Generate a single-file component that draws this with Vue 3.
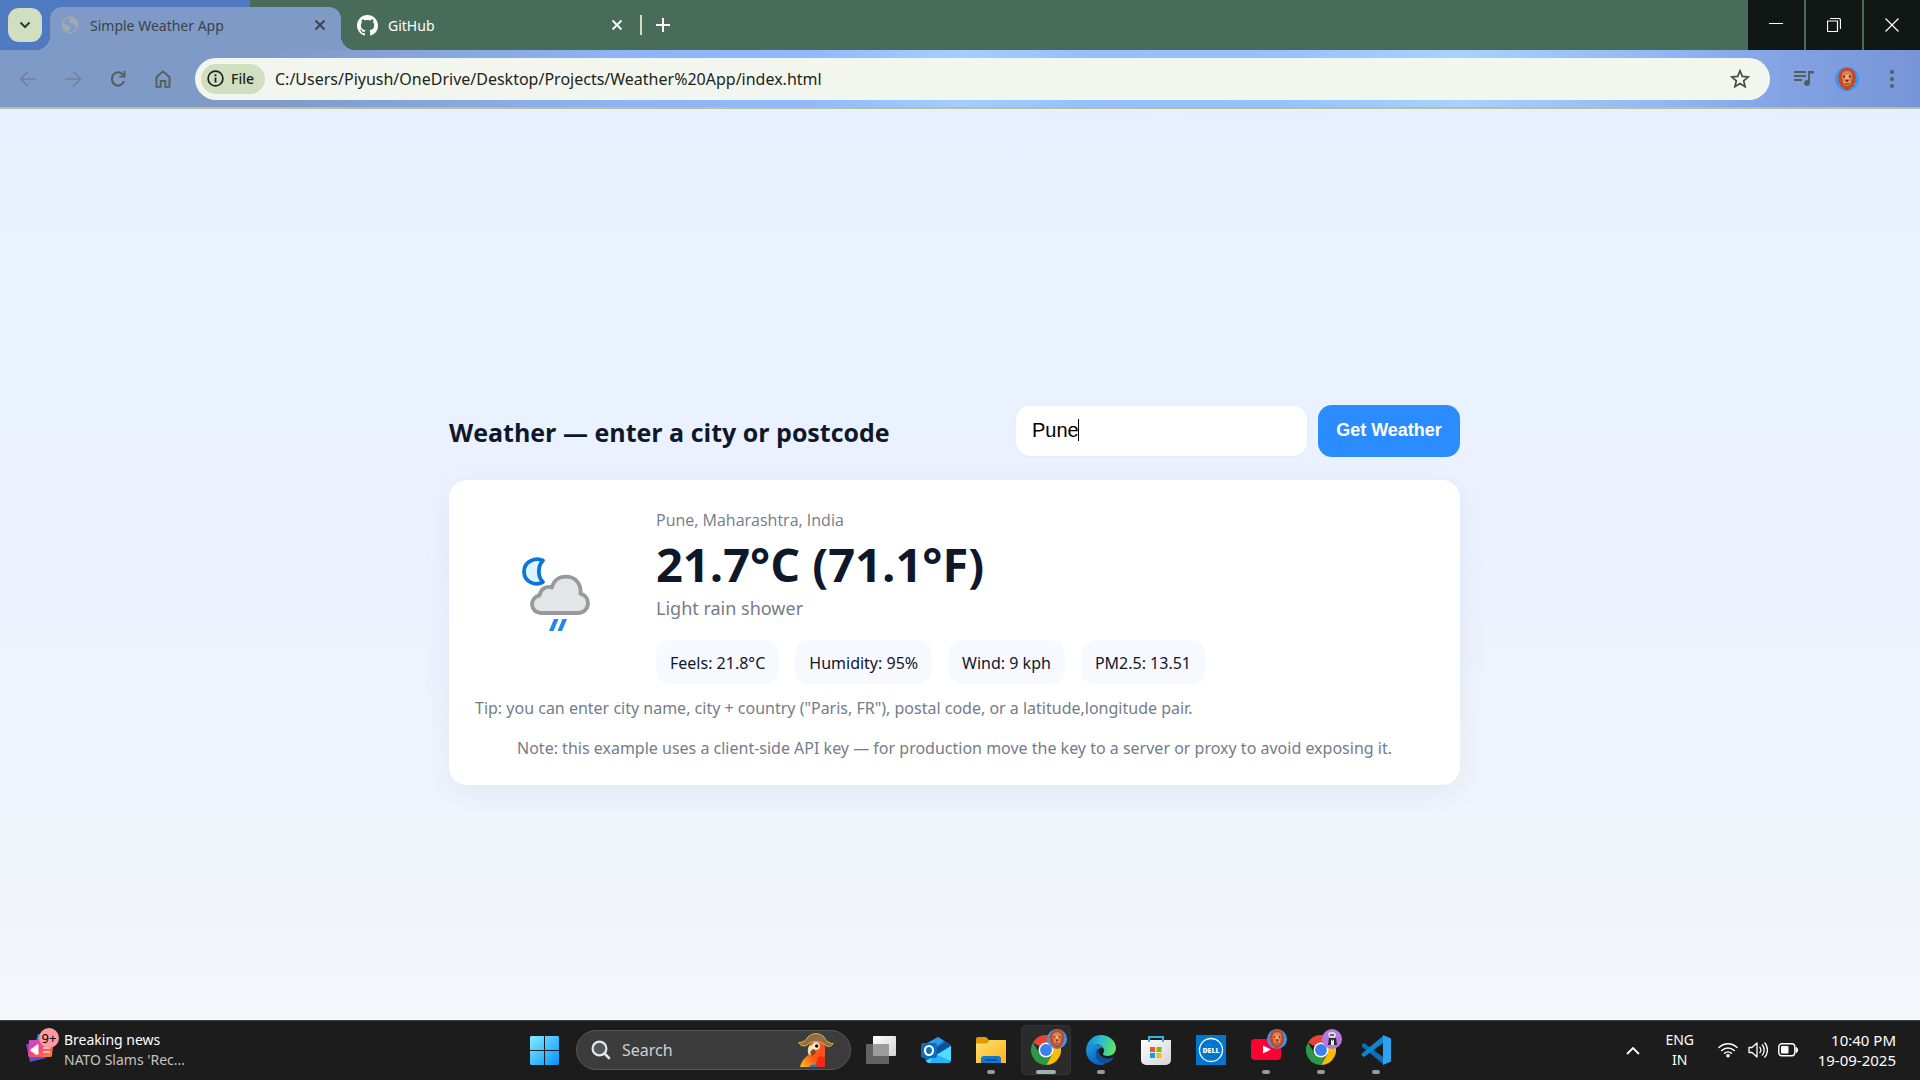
<script setup>
import { ref } from 'vue'

const city = ref('Pune')
const url = ref('C:/Users/Piyush/OneDrive/Desktop/Projects/Weather%20App/index.html')
const chips = ['Feels: 21.8°C', 'Humidity: 95%', 'Wind: 9 kph', 'PM2.5: 13.51']
</script>

<template>
  <div class="desktop">
    <!-- shared drawings -->
    <svg class="defs" width="0" height="0" aria-hidden="true">
      <defs>
        <linearGradient id="winG" x1="0" y1="0" x2="1" y2="1">
          <stop offset="0" stop-color="#7df0ff" /><stop offset="1" stop-color="#0a8fff" />
        </linearGradient>
        <linearGradient id="foldG" x1="0" y1="0" x2="1" y2="1">
          <stop offset="0" stop-color="#ffe070" /><stop offset="1" stop-color="#fbb41c" />
        </linearGradient>
        <linearGradient id="edgeA" x1="0" y1="0.3" x2="1" y2="0.5">
          <stop offset="0" stop-color="#1590dc" /><stop offset="0.5" stop-color="#2cc0cf" /><stop offset="1" stop-color="#62e45a" />
        </linearGradient>
        <linearGradient id="edgeB" x1="0" y1="0" x2="0.6" y2="1">
          <stop offset="0" stop-color="#1b9de2" /><stop offset="1" stop-color="#0c5fbd" />
        </linearGradient>
        <linearGradient id="whiteG" x1="0" y1="0" x2="1" y2="1">
          <stop offset="0" stop-color="#ffffff" /><stop offset="1" stop-color="#d2d2d2" />
        </linearGradient>
        <linearGradient id="newsG" x1="0" y1="0" x2="1" y2="1">
          <stop offset="0" stop-color="#c546d8" /><stop offset="0.5" stop-color="#f2477e" /><stop offset="1" stop-color="#f98a2c" />
        </linearGradient>
        <linearGradient id="parrotG" x1="1" y1="0" x2="0" y2="1">
          <stop offset="0" stop-color="#ff4a26" /><stop offset="0.55" stop-color="#fb5a17" /><stop offset="1" stop-color="#ffc21f" />
        </linearGradient>
        <symbol id="lion" viewBox="0 0 24 24">
          <circle cx="12" cy="12" r="12" fill="#3f97e8" />
          <path d="M12 0.6l2 1 2.6 0 1.2 2 2.2 1.4-.2 2.6 1.4 2.4-1 2.2.4 2.6-1.8 2-.4 2.6-2.4 1-1.4 2-2.6 1.2-2.6-1.2-1.4-2-2.4-1-.4-2.6-1.8-2 .4-2.6-1-2.2 1.4-2.4-.2-2.6 2.2-1.4 1.2-2 2.6 0z" fill="#c4492b" />
          <path d="M12 4c3.600 0 5.400 2 5.200 5.500l-1 5.500c-.5 2.500-2.200 4-4.200 4s-3.700-1.500-4.200-4l-1-5.500C6.600 6 8.400 4 12 4z" fill="#dd8453" />
          <path d="M10.700 8h2.600l1 6.500-2.300 1.600-2.300-1.600z" fill="#f0b183" />
          <circle cx="9" cy="9.600" r="1" fill="#4a1d14" /><circle cx="15" cy="9.600" r="1" fill="#4a1d14" />
          <path d="M10.400 13h3.200L12 15zM10 17h4" fill="#5b2018" stroke="#7a2d1c" stroke-width="1" />
        </symbol>
        <symbol id="chrome" viewBox="0 0 48 48">
          <path d="M24 24L3.200 12A24 24 0 0 1 44.800 12H24z" fill="#ea4335" />
          <path d="M24 12h20.800A24 24 0 0 1 24 48L34.400 30z" fill="#fbbc04" />
          <path d="M24 48A24 24 0 0 1 3.200 12L13.600 30 24 36l10.400-6z" fill="#2b9948" />
          <circle cx="24" cy="24" r="12" fill="#fff" /><circle cx="24" cy="24" r="9.500" fill="#3c7ff0" />
        </symbol>
      </defs>
    </svg>

    <header class="browser">
      <div class="tabstrip">
        <div class="strip-left">
          <button class="tab-search" aria-label="Search tabs">
            <svg width="14" height="14" viewBox="0 0 14 14"><path d="M2.500 4.500L7 9l4.500-4.500" fill="none" stroke="#2f3a2d" stroke-width="2" /></svg>
          </button>
        </div>
        <div class="tab active">
          <svg width="18" height="18" viewBox="0 0 18 18">
            <circle cx="9" cy="9" r="7.700" fill="none" stroke="#a2a8b0" stroke-width="1.500" />
            <path d="M9.500 1.500c-1 1.500-.5 2.500-2 3.200-.8 2 2.200 1.300 2.600 2.800.6 1.800 3.200.6 3.200 2.300 0 1.200 2 .8 3.200.2C17 5 14 1.500 9.500 1.500zM1.500 8c2 .3 4.500-.2 5.500 1.500.6 1.200 2.600.8 2.600 2.400 0 1.500-2 1.500-2 3.200L7 16.200C3.500 15.500 1.200 12 1.500 8z" fill="#a2a8b0" />
          </svg>
          <span class="tab-title">Simple Weather App</span>
          <button class="tab-close" aria-label="Close Simple Weather App">
            <svg width="12" height="12" viewBox="0 0 12 12"><path d="M1.500 1.500l9 9M10.500 1.500l-9 9" stroke="currentColor" stroke-width="1.800" /></svg>
          </button>
        </div>
        <div class="tab idle">
          <svg width="21" height="21" viewBox="0 0 16 16"><path fill="#fff" d="M8 0C3.580 0 0 3.580 0 8c0 3.540 2.290 6.530 5.470 7.590.4.070.55-.17.55-.38 0-.19-.01-.82-.01-1.490-2.010.37-2.530-.49-2.690-.94-.09-.23-.48-.94-.82-1.130-.28-.15-.68-.52-.01-.53.63-.01 1.080.58 1.230.82.72 1.210 1.870.87 2.330.66.070-.52.28-.87.51-1.070-1.780-.2-3.640-.89-3.640-3.950 0-.87.31-1.590.82-2.150-.08-.2-.36-1.020.08-2.120 0 0 .67-.21 2.200.82.64-.18 1.320-.27 2-.27s1.360.09 2 .27c1.530-1.040 2.200-.82 2.200-.82.44 1.100.16 1.920.08 2.120.51.56.82 1.270.82 2.150 0 3.070-1.870 3.750-3.650 3.950.29.25.54.73.54 1.480 0 1.070-.01 1.930-.01 2.200 0 .21.15.46.55.38A8.010 8.010 0 0 0 16 8c0-4.420-3.580-8-8-8z" /></svg>
          <span class="tab-title">GitHub</span>
          <button class="tab-close" aria-label="Close GitHub">
            <svg width="12" height="12" viewBox="0 0 12 12"><path d="M1.500 1.500l9 9M10.500 1.500l-9 9" stroke="currentColor" stroke-width="1.800" /></svg>
          </button>
        </div>
        <span class="tab-divider"></span>
        <button class="new-tab" aria-label="New tab">
          <svg width="14" height="14" viewBox="0 0 14 14"><path d="M7 0v14M0 7h14" stroke="#fff" stroke-width="2" /></svg>
        </button>
        <div class="window-buttons">
          <button aria-label="Minimize"><svg width="14" height="14" viewBox="0 0 14 14"><path d="M0 5.500h14" stroke="#fff" /></svg></button>
          <button aria-label="Restore"><svg width="14" height="14" viewBox="0 0 14 14"><path d="M.5 3h10v10.500H.5zM3 .5h8.500a2 2 0 0 1 2 2V11" fill="none" stroke="#fff" stroke-width="1.200" /></svg></button>
          <button aria-label="Close"><svg width="14" height="14" viewBox="0 0 14 14"><path d="M.5.5l13 13M13.500.5l-13 13" stroke="#fff" stroke-width="1.200" /></svg></button>
        </div>
      </div>

      <div class="toolbar">
        <nav class="nav" aria-label="Navigation">
          <button class="dim" aria-label="Back"><svg width="18" height="18" viewBox="0 0 18 18"><path d="M17 9H2M9 1.500L1.500 9 9 16.500" fill="none" stroke="currentColor" stroke-width="1.700" /></svg></button>
          <button class="dim" aria-label="Forward"><svg width="18" height="18" viewBox="0 0 18 18"><path d="M1 9h15M9 1.500L16.500 9 9 16.500" fill="none" stroke="currentColor" stroke-width="1.700" /></svg></button>
          <button aria-label="Reload"><svg width="16" height="18" viewBox="0 0 16 18"><path d="M14 11A6.200 6.700 0 1 1 12.800 4.500l1.200 1.500" fill="none" stroke="currentColor" stroke-width="2" /><path d="M15.500 1v6.500H9.500V5.800h4V1z" fill="currentColor" /></svg></button>
          <button aria-label="Home"><svg width="16" height="18" viewBox="0 0 16 18"><path d="M1.500 16.900V7L8 1.400 14.500 7v9.900h-4.200V11H5.700v5.900z" fill="none" stroke="currentColor" stroke-width="1.900" /></svg></button>
        </nav>
        <div class="omnibox">
          <button class="file-chip">
            <svg width="17" height="17" viewBox="0 0 17 17"><circle cx="8.500" cy="8.500" r="7.400" fill="none" stroke="#1c211b" stroke-width="1.700" /><path d="M8.500 7.500v5M8.500 4.300v1.900" stroke="#1c211b" stroke-width="1.800" /></svg>
            File
          </button>
          <input v-model="url" class="url" type="text" aria-label="Address" />
          <button class="star" aria-label="Bookmark this tab">
            <svg width="20" height="20" viewBox="0 0 20 20"><path d="M10 1.800l2.300 5.600 6 .5-4.600 3.900 1.400 5.900-5.100-3.100-5.100 3.100 1.400-5.900L1.700 7.900l6-.5z" fill="none" stroke="#474d45" stroke-width="1.700" /></svg>
          </button>
        </div>
        <div class="tools">
          <button aria-label="Media controls"><svg width="20" height="18" viewBox="0 0 20 18"><path d="M0 2h12M0 6h12M0 10h8" stroke="currentColor" stroke-width="2" /><path d="M14 1h6v2.400h-4V13a3 3 0 1 1-2-2.800z" fill="currentColor" /></svg></button>
          <button aria-label="Profile"><svg width="24" height="24"><use href="#lion" /></svg></button>
          <button class="menu" aria-label="Menu"><svg width="4" height="20" viewBox="0 0 4 20"><g fill="currentColor"><circle cx="2" cy="3" r="2" /><circle cx="2" cy="10" r="2" /><circle cx="2" cy="17" r="2" /></g></svg></button>
        </div>
      </div>
    </header>

    <main class="page">
      <div class="app">
        <form class="app-head" @submit.prevent>
          <h1>Weather — enter a city or postcode</h1>
          <div class="field">
            <input v-model="city" type="text" aria-label="City or postcode" />
            <span class="caret"></span>
          </div>
          <button class="go" type="submit">Get Weather</button>
        </form>

        <section class="card">
          <div class="current">
            <svg class="weather-icon" width="96" height="96" viewBox="0 0 96 96">
              <path d="M36 13.500C29 10 17 14 17 24.500s11.500 15 19 10.500c-5.500-5-5.500-16 0-21.500z" fill="#dcf5ff" stroke="#0f74d8" stroke-width="3.800" stroke-linejoin="round" />
              <path d="M34 66a8.800 8.800 0 0 1-1.500-17.500C33.500 42 39 38.500 45 40.500 46.500 33.500 52 29.700 59 29.700c9.500 0 15.500 7.300 14.500 17 4.500 1.300 7.500 5 7.500 9.500 0 5.600-4.400 9.800-10 9.800z" fill="#e3e5e7" stroke="#97999b" stroke-width="3.800" stroke-linejoin="round" />
              <path d="M47 72h4.500l-5 12H42zM55.500 72H60l-5 12h-4.500z" fill="#2386ea" />
            </svg>
            <div class="reading">
              <p class="place">Pune, Maharashtra, India</p>
              <p class="temp">21.7°C (71.1°F)</p>
              <p class="condition">Light rain shower</p>
              <ul class="chips">
                <li v-for="c in chips" :key="c">{{ c }}</li>
              </ul>
            </div>
          </div>
          <p class="tip">Tip: you can enter city name, city + country ("Paris, FR"), postal code, or a latitude,longitude pair.</p>
          <p class="note">Note: this example uses a client-side API key — for production move the key to a server or proxy to avoid exposing it.</p>
        </section>
      </div>
    </main>

    <footer class="taskbar">
      <button class="news">
        <span class="news-icon">
          <svg width="30" height="32" viewBox="0 0 30 32">
            <path d="M13 4l14 3-4 16-14-3z" fill="#1d9bea" />
            <path d="M1 14l18 1 2 13-16 4z" fill="#6a4bd0" />
            <path d="M4 10h23a1.500 1.500 0 0 1 1.500 1.700L27 25.500a2 2 0 0 1-2 1.500H5a2 2 0 0 1-2-2z" fill="url(#newsG)" />
            <path d="M6 19.500l7-5v10l-7-3.500zM8 21l3 4" fill="#fff" stroke="#fff" />
            <path d="M18 18h7M18 22h7" stroke="#ffd7cf" stroke-width="1.600" />
          </svg>
          <span class="badge">9+</span>
        </span>
        <span class="news-text"><span>Breaking news</span><span class="muted">NATO Slams 'Rec...</span></span>
      </button>

      <div class="apps">
        <button class="slot start" aria-label="Start">
          <svg width="29" height="29" viewBox="0 0 29 29"><path d="M1 0h13v14H0V1zM15 0h13l1 1v13H15zM0 15h14v14H1l-1-1zM15 15h14v13l-1 1H15z" fill="url(#winG)" /></svg>
        </button>
        <label class="search">
          <svg width="20" height="20" viewBox="0 0 20 20"><circle cx="8.500" cy="8.500" r="6.900" fill="#55585a" stroke="#e6e6e6" stroke-width="2.200" /><path d="M13.500 13.500l4.500 4.500" stroke="#e6e6e6" stroke-width="2.600" stroke-linecap="round" /></svg>
          <input type="text" placeholder="Search" aria-label="Search" />
          <svg class="parrot" width="36" height="34" viewBox="0 0 36 34">
            <path d="M11 13C12 7 26 6 27 14v20H2c2-7 6-11 10-13z" fill="url(#parrotG)" />
            <path d="M20 24c4-2 6 1 7 0v10H17z" fill="#f02c16" />
            <path d="M11 34c2-3 5-3 8-1v1z" fill="#2577c8" />
            <path d="M14 12c-5 0-5 7-3 10 1.500 0 5-3 5-6z" fill="#efe2b5" /><path d="M12 19l4-4 2 5-4 3z" fill="#8a4a20" />
            <circle cx="18" cy="13" r="3.800" fill="#fff1e4" /><circle cx="18.700" cy="13" r="1.800" fill="#1b1310" />
            <path d="M.8 9.500C5 9.500 8 7.500 10 4c4-4.500 12-4.500 16 0 2 3.500 5 6.500 9.200 6.500-1 2-4 4-6.700 2.500C22.500 7 14 7 8.500 12.500c-3 1.200-6.700 0-7.700-3z" fill="#8f7046" stroke="#e0b83c" stroke-width="1" />
          </svg>
        </label>
        <button class="slot" aria-label="Task view">
          <svg width="30" height="28" viewBox="0 0 30 28"><rect x="0" y="8" width="23" height="20" rx="1" fill="#636363" /><rect x="7" y="0" width="23" height="20" rx="1" fill="url(#whiteG)" /><path d="M7 8h16v12H7z" fill="#9c9c9c" /></svg>
        </button>
        <button class="slot" aria-label="Outlook">
          <svg width="30" height="28" viewBox="0 0 30 28">
            <path d="M4 8L17 1l13 8v14a4 4 0 0 1-4 4H9a5 5 0 0 1-5-5z" fill="#1373c9" />
            <path d="M5 8L17 1l6 4-11 8z" fill="#2f9be8" /><path d="M12 14L24 6l6 3.500-14 9z" fill="#0b4fa0" />
            <path d="M30 10v13a4 4 0 0 1-4 4H9c-2 0-3-1-4-2z" fill="#4fdcff" /><path d="M12 17l18 8c-1 1-2 2-4 2H9z" fill="#27b4f5" />
            <rect x="0" y="7" width="16" height="15" rx="2" fill="#0f6cbd" /><ellipse cx="8" cy="14.500" rx="4" ry="4.500" fill="none" stroke="#fff" stroke-width="2.200" />
          </svg>
        </button>
        <button class="slot running" aria-label="File Explorer">
          <svg width="30" height="28" viewBox="0 0 30 28"><path d="M0 3a2 2 0 0 1 2-2h8l3 3h14v10H0z" fill="#dc9c05" /><path d="M0 7.500h11L13.500 4H30v23H0z" fill="url(#foldG)" /><path d="M5 27v-4a3 3 0 0 1 3-3h14a3 3 0 0 1 3 3v4z" fill="#1578cd" /><path d="M9 24h12" stroke="#0b4f94" stroke-width="1.500" /></svg>
        </button>
        <button class="slot focused" aria-label="Chrome">
          <svg width="30" height="30"><use href="#chrome" /></svg>
          <svg class="avatar" width="20" height="20"><use href="#lion" /></svg>
        </button>
        <button class="slot running" aria-label="Edge">
          <svg width="30" height="30" viewBox="0 0 30 30">
            <path d="M0 15C1 6 7 0 15 0s15 6 15 13c0 5-4 8-8.500 8-3 0-5-1-4.500-2.500 1-1.500 1.500-2.500 1-4C17 11 13 9 9 9c-4.500 0-8 3-9 6z" fill="url(#edgeA)" />
            <path d="M0 15c1-4 5-6.500 9-6 4 .2 7 2 8 4-3-1-6 2-5.500 6 .5 5 4 8.500 8 9.500-1.500 1-3 1.500-5 1.500C6 30 0 23 0 15z" fill="url(#edgeB)" />
            <path d="M12.500 13C9 15 8.500 21 12 25c3 4 9 4.500 13 1 1.500-1.300 2.500-2.700 2.800-4-4.800 3-13.800 1-15.300-5z" fill="#124f97" />
          </svg>
        </button>
        <button class="slot" aria-label="Microsoft Store">
          <svg width="30" height="30" viewBox="0 0 30 30"><path d="M0 5h30v20a5 5 0 0 1-5 5H5a5 5 0 0 1-5-5z" fill="url(#whiteG)" /><path d="M8 7V2h14v5" fill="none" stroke="#2fb4e8" stroke-width="2" /><path d="M9 12h5v5H9z" fill="#f05125" /><path d="M15.500 12h5v5h-5z" fill="#7fba00" /><path d="M9 18h5v5H9z" fill="#00a4ef" /><path d="M15.500 18h5v5h-5z" fill="#ffb900" /></svg>
        </button>
        <button class="slot" aria-label="Dell">
          <svg width="30" height="30" viewBox="0 0 30 30"><path d="M0 0h30v30H0z" fill="#0076ce" /><circle cx="15" cy="15" r="11.500" fill="none" stroke="#fff" stroke-width="1.300" /><text x="15" y="18" text-anchor="middle" font-family="Open Sans, sans-serif" font-size="7" font-weight="800" fill="#fff">DELL</text></svg>
        </button>
        <button class="slot running" aria-label="YouTube">
          <svg width="30" height="22" viewBox="0 0 30 22"><rect width="30" height="21" rx="4" fill="#ff0033" /><path d="M12 6.500l8 4-8 4z" fill="#fff" /></svg>
          <svg class="avatar" width="20" height="20"><use href="#lion" /></svg>
        </button>
        <button class="slot running" aria-label="Chrome, second profile">
          <svg width="30" height="30"><use href="#chrome" /></svg>
          <svg class="avatar" width="20" height="20" viewBox="0 0 20 20"><circle cx="10" cy="10" r="10" fill="#b678e0" /><path d="M6 5c1-3 8-3 8 1l-1 3H9L7 8z" fill="#ddd" /><path d="M8 5h4v2H8z" fill="#666" /><path d="M7 9h7l1 7H6z" fill="#2b2430" /><path d="M9 10l1.500 2L12 10v6H9z" fill="#eee" /></svg>
        </button>
        <button class="slot running" aria-label="Visual Studio Code">
          <svg width="30" height="30" viewBox="0 0 30 30"><path d="M1 9.500l2-1.500 19 14v7L.8 11.500z" fill="#0a70b8" /><path d="M22 1v7L3 22l-2-1.500c-1-1 0-2 0-2z" fill="#0e86d2" /><path d="M22 0l8 3.500v23L22 30z" fill="#2aa4f2" /></svg>
        </button>
      </div>

      <div class="tray">
        <button class="chevron" aria-label="Show hidden icons"><svg width="14" height="9" viewBox="0 0 14 9"><path d="M1 8l6-6 6 6" fill="none" stroke="#fff" stroke-width="1.800" /></svg></button>
        <button class="lang"><span>ENG</span><span>IN</span></button>
        <button class="status" aria-label="Network, volume, battery">
          <svg width="20" height="16" viewBox="0 0 20 16"><g fill="none" stroke="#fff" stroke-width="1.500" stroke-linecap="round"><path d="M1 5.500a12.700 12.700 0 0 1 18 0M3.800 8.500a8.800 8.800 0 0 1 12.400 0M6.600 11.300a4.900 4.900 0 0 1 6.800 0" /></g><circle cx="10" cy="13.800" r="1.800" fill="#fff" /></svg>
          <svg width="20" height="18" viewBox="0 0 20 18"><path d="M1 6.500h3l5-4.500v14l-5-4.500H1zM11.500 6a4 4 0 0 1 0 6M14 3.500a8 8 0 0 1 0 11M16.500 1.500a11 11 0 0 1 0 15" fill="none" stroke="#fff" stroke-width="1.300" stroke-linejoin="round" /></svg>
          <svg width="20" height="14" viewBox="0 0 20 14"><rect x=".8" y=".8" width="16" height="12" rx="3" fill="none" stroke="#fff" stroke-width="1.400" /><rect x="3" y="3" width="7.500" height="7.600" rx="1" fill="#fff" /><path d="M18 4.500c2 0 2 5 0 5z" fill="#fff" stroke="#fff" /></svg>
        </button>
        <button class="clock"><span>10:40 PM</span><span>19-09-2025</span></button>
      </div>
    </footer>
  </div>
</template>

<style>
body {
  margin: 0;
}
</style>

<style scoped>
* {
  box-sizing: border-box;
}
.desktop {
  display: flex;
  flex-direction: column;
  min-height: 100vh;
  font-family: "Noto Sans", "Open Sans", sans-serif;
  color: #0f172a;
}
.defs {
  position: absolute;
}
button,
input {
  font: inherit;
  color: inherit;
  border: 0;
  padding: 0;
  background: none;
  outline: none;
}
p,
h1,
ul {
  margin: 0;
  padding: 0;
}
svg {
  display: block;
  flex: none;
}

/* browser frame */
.tabstrip {
  display: flex;
  height: 50px;
  background: linear-gradient(90deg, #4f79c0 250px, #486b5a 250px);
}
.strip-left {
  width: 50px;
  padding: 8px;
}
.tab-search {
  width: 34px;
  height: 34px;
  display: grid;
  place-items: center;
  border-radius: 11px;
  background: #d0dfc0;
}
.tab {
  position: relative;
  display: flex;
  align-items: center;
  font-size: 14px;
}
.tab-title {
  flex: 1;
  white-space: nowrap;
}
.tab-close {
  padding: 6px;
}
.active {
  width: 291px;
  height: 43px;
  margin-top: 7px;
  padding: 0 9px 7px 11px;
  gap: 11px;
  border-radius: 12px 12px 0 0;
  background: #7f9ac7;
  color: #3c4248;
}
.active::before,
.active::after {
  content: "";
  position: absolute;
  bottom: 0;
  width: 14px;
  height: 14px;
}
.active::before {
  right: 100%;
  background: radial-gradient(circle at 0 0, transparent 14px, #7f9ac7 14px);
}
.active::after {
  left: 100%;
  background: radial-gradient(circle at 100% 0, transparent 14px, #7f9ac7 14px);
}
.idle {
  width: 299px;
  padding: 0 11px 0 16px;
  gap: 10px;
  color: #fff;
}
.tab-divider {
  width: 2px;
  height: 20px;
  margin-top: 15px;
  background: #d0dfc0;
}
.new-tab {
  width: 42px;
  display: grid;
  place-items: center;
}
.window-buttons {
  display: flex;
  gap: 2px;
  margin-left: auto;
}
.window-buttons button {
  width: 56px;
  display: grid;
  place-items: center;
  background: #101714;
}
.toolbar {
  display: flex;
  align-items: center;
  height: 59px;
  border-bottom: 2px solid #b3c0a6;
  background: linear-gradient(90deg, #7f9ac7 0, #7f9ac7 14%, #8fb4f6 33%, #91b8ff 42%, #a4cefd 50%, #95bffe 57%, #97c2fe 67%, #a8d2fc 76%, #93b8f4 86%, #82a2e4 93%, #7795d8 100%);
}
.nav {
  display: flex;
  gap: 9px;
  width: 195px;
  padding-left: 10px;
  color: #535f5c;
}
.nav button {
  width: 36px;
  height: 36px;
  display: grid;
  place-items: center;
}
.nav .dim {
  color: #6d83a0;
}
.omnibox {
  display: flex;
  align-items: center;
  flex: 1;
  height: 42px;
  padding: 0 20px 0 6px;
  border-radius: 21px;
  background: #f3f6ee;
  color: #202420;
}
.file-chip {
  display: flex;
  align-items: center;
  gap: 7px;
  width: 64px;
  height: 30px;
  padding-left: 6px;
  border-radius: 15px;
  background: #d0dfc0;
  font-size: 14px;
  font-weight: 500;
}
.url {
  flex: 1;
  height: 36px;
  margin-left: 10px;
  font-size: 16px;
}
.tools {
  display: flex;
  align-items: center;
  gap: 21px;
  width: 150px;
  padding-left: 24px;
  color: #535f5c;
}
.menu {
  width: 24px;
  display: grid;
  place-items: center;
}

/* weather page */
.page {
  flex: 1;
  padding: 296px 11px 60px 0;
  background: linear-gradient(180deg, #e8f0ff 0%, #ecf2fe 50%, #f3f6fa 100%);
}
.app {
  width: 100%;
  max-width: 1011px;
  margin: 0 auto;
}
.app-head {
  display: flex;
  align-items: center;
  gap: 11px;
  margin-bottom: 23px;
}
h1 {
  flex: 1;
  padding-top: 2px;
  font-family: "Open Sans", sans-serif;
  font-size: 25px;
  line-height: 36px;
  font-weight: 700;
  white-space: nowrap;
}
.field {
  position: relative;
}
.field input {
  display: block;
  width: 291px;
  height: 50px;
  padding: 0 16px 2px;
  border-radius: 14px;
  background: #fff;
  box-shadow: 0 1px 3px rgba(15, 60, 140, 0.05);
  font: 20px "Liberation Sans", Arial, sans-serif;
  color: #000;
}
.caret {
  position: absolute;
  left: 62px;
  top: 13px;
  width: 1px;
  height: 22px;
  background: #000;
}
.go {
  width: 142px;
  height: 52px;
  padding-bottom: 2px;
  border-radius: 14px;
  background: #2b8cff;
  color: #fff;
  font: 700 18px "Liberation Sans", Arial, sans-serif;
}
.card {
  padding: 26px 26px 25px;
  border-radius: 18px;
  background: #fff;
  box-shadow: 0 8px 32px rgba(15, 35, 80, 0.06);
}
.current {
  display: grid;
  grid-template-columns: 160px 1fr;
  gap: 21px;
  align-items: center;
}
.weather-icon {
  justify-self: center;
}
.place,
.condition,
.tip,
.note {
  color: #757c89;
}
.place {
  font-family: "Open Sans", sans-serif;
  font-size: 16px;
  line-height: 28px;
}
.temp {
  font-family: "Open Sans", sans-serif;
  font-size: 47px;
  line-height: 60px;
  font-weight: 700;
}
.condition {
  font-size: 18px;
  line-height: 28px;
}
.chips {
  display: flex;
  flex-wrap: wrap;
  gap: 16px;
  margin-top: 18px;
  list-style: none;
}
.chips li {
  height: 44px;
  padding: 0 14px;
  border-radius: 14px;
  background: #f8f9ff;
  font-size: 16px;
  line-height: 46px;
}
.tip,
.note {
  font-size: 16px;
  line-height: 24px;
}
.tip {
  margin-top: 12px;
}
.note {
  margin-top: 16px;
  text-align: center;
}

/* taskbar */
.taskbar {
  display: grid;
  grid-template-columns: 1fr auto 1fr;
  align-items: center;
  height: 60px;
  box-shadow: inset 0 1px #3b3f42;
  background: #1c1c1c;
  color: #fff;
  font-size: 14px;
  line-height: 20px;
}
.news {
  display: flex;
  gap: 9px;
  padding-left: 25px;
  text-align: left;
}
.news-icon {
  position: relative;
}
.badge {
  position: absolute;
  left: 14px;
  top: -2px;
  width: 20px;
  height: 20px;
  border-radius: 10px;
  background: #ff99a4;
  color: #000;
  font-size: 13px;
  text-align: center;
}
.news-text,
.lang,
.clock {
  display: flex;
  flex-direction: column;
}
.muted {
  color: #c4c4c4;
}
.apps {
  display: flex;
  gap: 5px;
  align-items: center;
}
.slot {
  position: relative;
  display: grid;
  place-items: center;
  width: 50px;
  height: 50px;
  border-radius: 5px;
}
.start {
  margin-right: 2px;
}
.focused {
  background: #2b2b2b;
  box-shadow: inset 0 0 0 1px #343434;
}
.running::after,
.focused::after {
  content: "";
  position: absolute;
  bottom: 1px;
  left: 21px;
  width: 8px;
  height: 4px;
  border-radius: 2px;
  background: #999;
}
.focused::after {
  left: 15px;
  width: 20px;
  background: #9fb0b6;
}
.avatar {
  position: absolute;
  left: 26px;
  top: 4px;
}
.search {
  display: flex;
  align-items: center;
  width: 275px;
  height: 40px;
  padding: 0 16px 0 14px;
  border: 1px solid #565656;
  border-radius: 20px;
  background: #3c3c3c;
}
.search input {
  flex: 1;
  min-width: 0;
  margin-left: 11px;
  font-size: 16px;
}
.search input::placeholder {
  color: #d0d0d0;
  opacity: 1;
}
.tray {
  display: flex;
  align-items: center;
  justify-content: flex-end;
  padding-right: 24px;
}
.lang {
  width: 40px;
  margin-left: 20px;
  text-align: center;
}
.status {
  display: flex;
  align-items: center;
  gap: 10px;
  margin-left: 18px;
}
.clock {
  margin-left: 20px;
  font-size: 15px;
  text-align: right;
}
</style>
